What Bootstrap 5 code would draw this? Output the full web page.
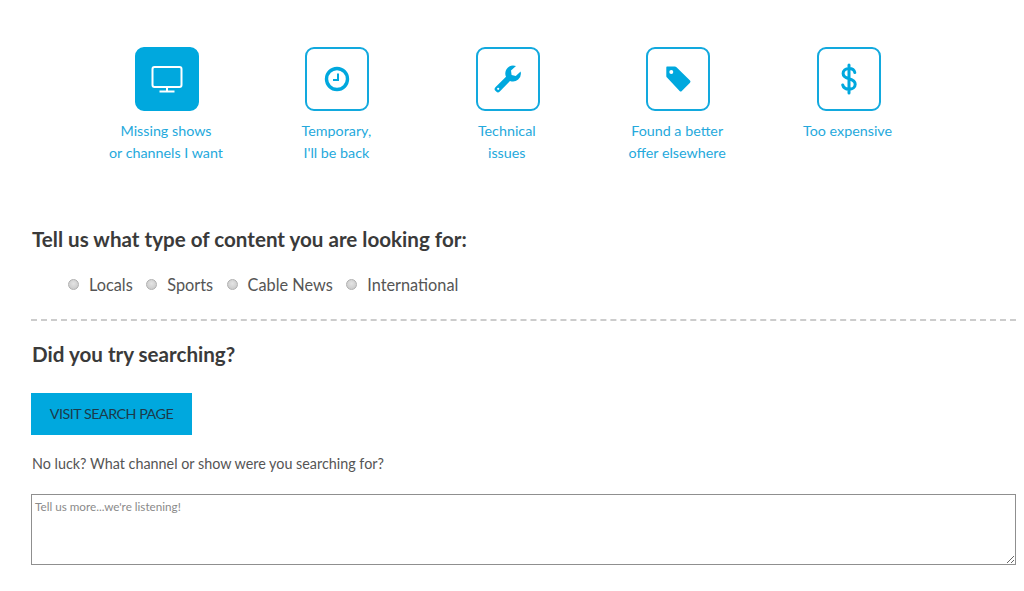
<!DOCTYPE html>
<html lang="en">
<head>
<meta charset="utf-8">
<title>Cancel survey</title>
<link rel="stylesheet" href="https://cdn.jsdelivr.net/npm/bootstrap@5.3.0/dist/css/bootstrap.min.css">
<style>
html,body{height:591px;overflow:hidden}
body{font-family:Lato,"Liberation Sans",sans-serif;color:#4a4a4a;background:#fff}
.page-wrap{padding:47px 8px 0 31px}
.reason-row{margin:0 50px 0 50.8px}
.reason{width:170.4px;flex:none;text-align:center;color:#25a9dc;font-size:14.3px;line-height:22px}
.reason-box{width:64px;height:64px;border:2px solid #12a9de;border-radius:9px;margin:0 auto 9px;color:#00a8de}
.reason-box.active{background:#00a8de;border-color:#00a8de;color:#fff}
.reason-label{transform:translateX(-1px)}
.survey-title{font-size:20.6px;line-height:26px;font-weight:700;color:#3a3a3a;margin:0 0 0 1px}
.title-content{margin-top:62px}
.radio-row{margin:21px 0 0 37px;height:24px;font-size:16.3px;color:#555;gap:13.5px}
.radio-row label{gap:10px}
.radio-dot{appearance:none;width:11px;height:11px;border:1px solid #b0b0b0;border-radius:50%;background:radial-gradient(circle at 50% 40%,#e4e4e4,#c4c4c4);margin:0 0 1px;display:block}
.dash-line{border-top:2px dashed #ccc;margin:22px 0 0;height:0}
.title-search{margin-top:20px}
.search-btn{background:#00a8de;color:#1c3a4a;border:0;border-radius:0;width:161px;height:42px;margin-top:26px;font-size:14.3px;letter-spacing:-.5px;padding:0;display:block;line-height:42px}
.search-btn:hover{background:#00a8de;color:#1c3a4a}
.luck-text{font-size:14.35px;line-height:20px;color:#555;margin:19px 0 0 1px}
.more-box{display:block;width:100%;height:71px;margin-top:20px;border:1px solid #8f8f8f;border-radius:0;padding:4px 3px 3px;font-size:11.7px;line-height:14px;font-family:Lato,"Liberation Sans",sans-serif;color:#555}
.more-box::placeholder{color:#8a8a8a;opacity:1}
.more-box:focus{outline:0}
</style>
</head>
<body>
<div class="page-wrap">
  <div class="d-flex reason-row">
    <div class="reason">
      <div class="reason-box active d-flex align-items-center justify-content-center">
        <svg width="34" height="28" viewBox="0 0 34 28" fill="none" stroke="currentColor" stroke-width="2"><rect x="2.500" y="2" width="29" height="20" rx="2"/><path d="M17 22v4M9.500 26.500h15"/></svg>
      </div>
      <div class="reason-label">Missing shows<br>or channels I want</div>
    </div>
    <div class="reason">
      <div class="reason-box d-flex align-items-center justify-content-center">
        <svg width="28" height="28" viewBox="0 0 28 28" fill="none" stroke="currentColor"><circle cx="14" cy="14" r="10.500" stroke-width="3.400"/><path d="M15 8.500v6.500h-5" stroke-width="2"/></svg>
      </div>
      <div class="reason-label">Temporary,<br>I'll be back</div>
    </div>
    <div class="reason">
      <div class="reason-box d-flex align-items-center justify-content-center">
        <svg width="30" height="30" viewBox="0 0 30 30" fill="currentColor"><path d="M20 1.500a8 8 0 0 1 3 .6l-5 4.400 .6 4.400 4.200 1.200 4.800-4.600a8 8 0 0 1-10.600 9.500L6.800 27.600a2.600 2.600 0 0 1-3.600 0l-.8-.8a2.600 2.600 0 0 1 0-3.600L13 12.800A8 8 0 0 1 20 1.500z"/><circle cx="5.200" cy="24.800" r="1.100" fill="#fff"/></svg>
      </div>
      <div class="reason-label">Technical<br>issues</div>
    </div>
    <div class="reason">
      <div class="reason-box d-flex align-items-center justify-content-center">
        <svg width="28" height="28" viewBox="0 0 28 28" fill="currentColor"><path fill-rule="evenodd" d="M3 1.500h7.800q1 0 1.700 .7L26 15.600q1 1.100 0 2.200l-8.200 8.200q-1.100 1-2.200 0L3 12.600q-.7-.7-.7-1.700V2.500q0-1 .7-1zM7.300 5a2 2 0 1 0 0 4 2 2 0 0 0 0-4z"/></svg>
      </div>
      <div class="reason-label">Found a better<br>offer elsewhere</div>
    </div>
    <div class="reason">
      <div class="reason-box d-flex align-items-center justify-content-center">
        <svg width="20" height="32" viewBox="0 0 20 32" fill="none" stroke="currentColor" stroke-width="3" stroke-linecap="round"><path d="M15.800 9.500C15.300 7 13 5.500 10 5.500c-3.500 0-5.900 1.800-5.900 5 0 3 2.400 4.200 5.900 5.300 3.600 1.100 6.200 2.400 6.200 5.400 0 3.200-2.600 5-6.200 5-3.400 0-5.700-1.600-6.300-4.300M10 2v28"/></svg>
      </div>
      <div class="reason-label">Too expensive</div>
    </div>
  </div>

  <h2 class="survey-title title-content">Tell us what type of content you are looking for:</h2>
  <div class="d-flex align-items-center radio-row">
    <label class="d-flex align-items-center"><input class="radio-dot" type="radio" name="content">Locals</label>
    <label class="d-flex align-items-center"><input class="radio-dot" type="radio" name="content">Sports</label>
    <label class="d-flex align-items-center"><input class="radio-dot" type="radio" name="content">Cable News</label>
    <label class="d-flex align-items-center"><input class="radio-dot" type="radio" name="content">International</label>
  </div>
  <div class="dash-line"></div>
  <h2 class="survey-title title-search">Did you try searching?</h2>
  <a class="btn search-btn" href="#">VISIT SEARCH PAGE</a>
  <p class="luck-text">No luck? What channel or show were you searching for?</p>
  <textarea class="more-box" placeholder="Tell us more...we're listening!"></textarea>
</div>
<script src="https://cdn.jsdelivr.net/npm/bootstrap@5.3.0/dist/js/bootstrap.bundle.min.js"></script>
</body>
</html>
